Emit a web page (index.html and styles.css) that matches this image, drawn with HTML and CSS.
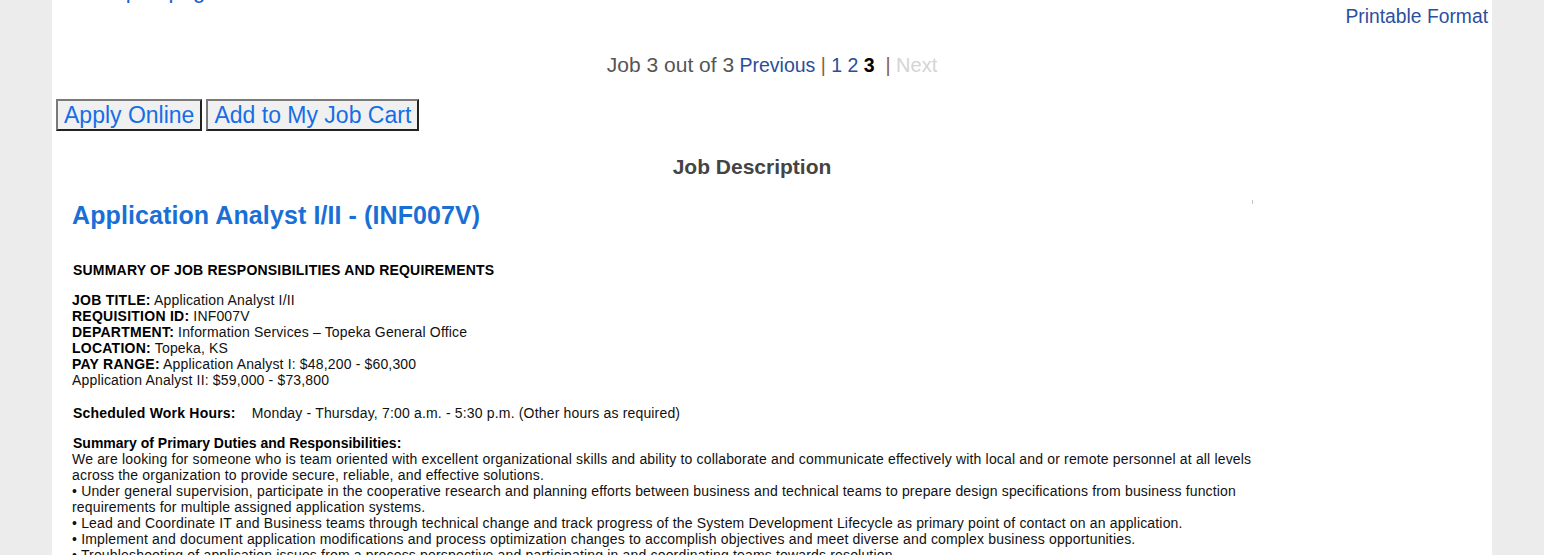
FILE: index.html
```html
<!DOCTYPE html>
<html lang="en">
<head>
<meta charset="utf-8">
<title>Application Analyst I/II - (INF007V)</title>
<link rel="stylesheet" href="styles.css">
</head>
<body>
<div class="page">
  <a class="toplink" href="#">Go top of page</a>
  <div class="print-row"><a class="print-link" href="#">Printable Format</a></div>
  <div class="pager"><span class="pager-label">Job 3 out of 3</span> <a class="pager-link" href="#">Previous</a> <span class="pipe">|</span> <a class="pager-link" href="#">1</a> <a class="pager-link" href="#">2</a> <b class="pager-current">3</b> &nbsp;<span class="pipe">|</span> <span class="pager-disabled">Next</span></div>
  <div class="actions">
    <button class="btn" type="button">Apply Online</button>
    <button class="btn" type="button">Add to My Job Cart</button>
  </div>
  <h2 class="desc-head">Job Description</h2>
  <div class="jobbox">
    <div class="title-row">
      <h1 class="job-title">Application Analyst I/II - (INF007V)</h1>
      <span class="tick"></span>
    </div>
    <div class="summary-head">SUMMARY OF JOB RESPONSIBILITIES AND REQUIREMENTS</div>
    <div class="facts">
      <div><b>JOB TITLE:</b> Application Analyst I/II</div>
      <div><b>REQUISITION ID:</b> INF007V</div>
      <div><b>DEPARTMENT:</b> Information Services – Topeka General Office</div>
      <div><b>LOCATION:</b> Topeka, KS</div>
      <div><b>PAY RANGE:</b> Application Analyst I: $48,200 - $60,300</div>
      <div>Application Analyst II: $59,000 - $73,800</div>
    </div>
    <div class="hours"><b class="hours-label">Scheduled Work Hours:</b><span class="hours-value">Monday - Thursday, 7:00 a.m. - 5:30 p.m. (Other hours as required)</span></div>
    <div class="duties">
      <div class="duties-head">Summary of Primary Duties and Responsibilities:</div>
      <p class="duties-text">We are looking for someone who is team oriented with excellent organizational skills and ability to collaborate and communicate effectively with local and or remote personnel at all levels across the organization to provide secure, reliable, and effective solutions.</p>
      <p class="duties-text">• Under general supervision, participate in the cooperative research and planning efforts between business and technical teams to prepare design specifications from business function requirements for multiple assigned application systems.</p>
      <p class="duties-text">• Lead and Coordinate IT and Business teams through technical change and track progress of the System Development Lifecycle as primary point of contact on an application.</p>
      <p class="duties-text">• Implement and document application modifications and process optimization changes to accomplish objectives and meet diverse and complex business opportunities.</p>
      <p class="duties-text">• Troubleshooting of application issues from a process perspective and participating in and coordinating teams towards resolution.</p>
    </div>
  </div>
</div>
</body>
</html>
```

FILE: styles.css
```css
html, body {
  margin: 0;
  padding: 0;
}
body {
  background: #ececec;
  font-family: "Liberation Sans", Arial, sans-serif;
  color: #000;
}
.page {
  display: flow-root;
  width: 1440px;
  margin: 0 auto;
  background: #fff;
  padding: 0 4px;
  box-sizing: border-box;
  min-height: 555px;
}
.toplink {
  display: block;
  margin: -22px 0 0 16px;
  font-size: 22px;
  line-height: 26px;
  color: #1a5fcf;
  text-decoration: none;
}
.print-row {
  margin-top: 2px;
  text-align: right;
  font-size: 19.3px;
  line-height: 22px;
}
.print-link {
  color: #2b4f9f;
  text-decoration: none;
}
.pager {
  margin-top: 25px;
  text-align: center;
  font-size: 19.5px;
  line-height: 24px;
}
.pager-label {
  color: #555;
  font-size: 21px;
}
.pager-link {
  color: #2a4d9c;
  text-decoration: none;
}
.pipe {
  color: #8a5a48;
}
.pager-current {
  color: #000;
}
.pager-disabled {
  color: #d4d4d4;
  font-size: 20px;
}
.actions {
  margin-top: 22px;
  display: flex;
  gap: 4px;
}
.btn {
  font-family: "Liberation Sans", Arial, sans-serif;
  font-size: 23px;
  line-height: 26px;
  color: #166ee6;
  background: #f0f0f0;
  padding: 1px 6px 1px;
  margin: 0;
  border-width: 2px;
  border-style: solid;
  border-color: #7a7a7a #222 #222 #7a7a7a;
  border-radius: 0;
  cursor: pointer;
}
.desc-head {
  margin: 24px 0 0;
  padding-right: 40px;
  text-align: center;
  font-size: 21px;
  line-height: 24px;
  font-weight: bold;
  color: #444;
}
.jobbox {
  margin-left: 16px;
  width: 1200px;
}
.title-row {
  margin-top: 21px;
  width: 1181px;
  display: flex;
  justify-content: space-between;
  align-items: flex-start;
}
.job-title {
  margin: 0;
  font-size: 25px;
  line-height: 30px;
  font-weight: bold;
  color: #1a6fd6;
  letter-spacing: 0.1px;
}
.tick {
  width: 1px;
  height: 4px;
  background: #c4c4c4;
}
.summary-head {
  margin: 32px 0 0 1px;
  font-size: 14px;
  line-height: 16px;
  font-weight: bold;
  letter-spacing: 0.2px;
}
.facts {
  margin-top: 14px;
  font-size: 14px;
  line-height: 16px;
  color: #111;
  letter-spacing: 0.16px;
}
.facts b {
  color: #000;
  letter-spacing: 0.25px;
}
.hours {
  margin: 17px 0 0 1px;
  font-size: 14px;
  line-height: 16px;
  display: flex;
  gap: 16px;
}
.hours-label {
  letter-spacing: 0.2px;
}
.hours-value {
  color: #111;
  letter-spacing: 0.17px;
}
.duties {
  margin-top: 14px;
  font-size: 14px;
  line-height: 16px;
}
.duties-head {
  margin-left: 1px;
  font-weight: bold;
}
.duties-text {
  margin: 0;
  color: #111;
  letter-spacing: 0.17px;
}
```
